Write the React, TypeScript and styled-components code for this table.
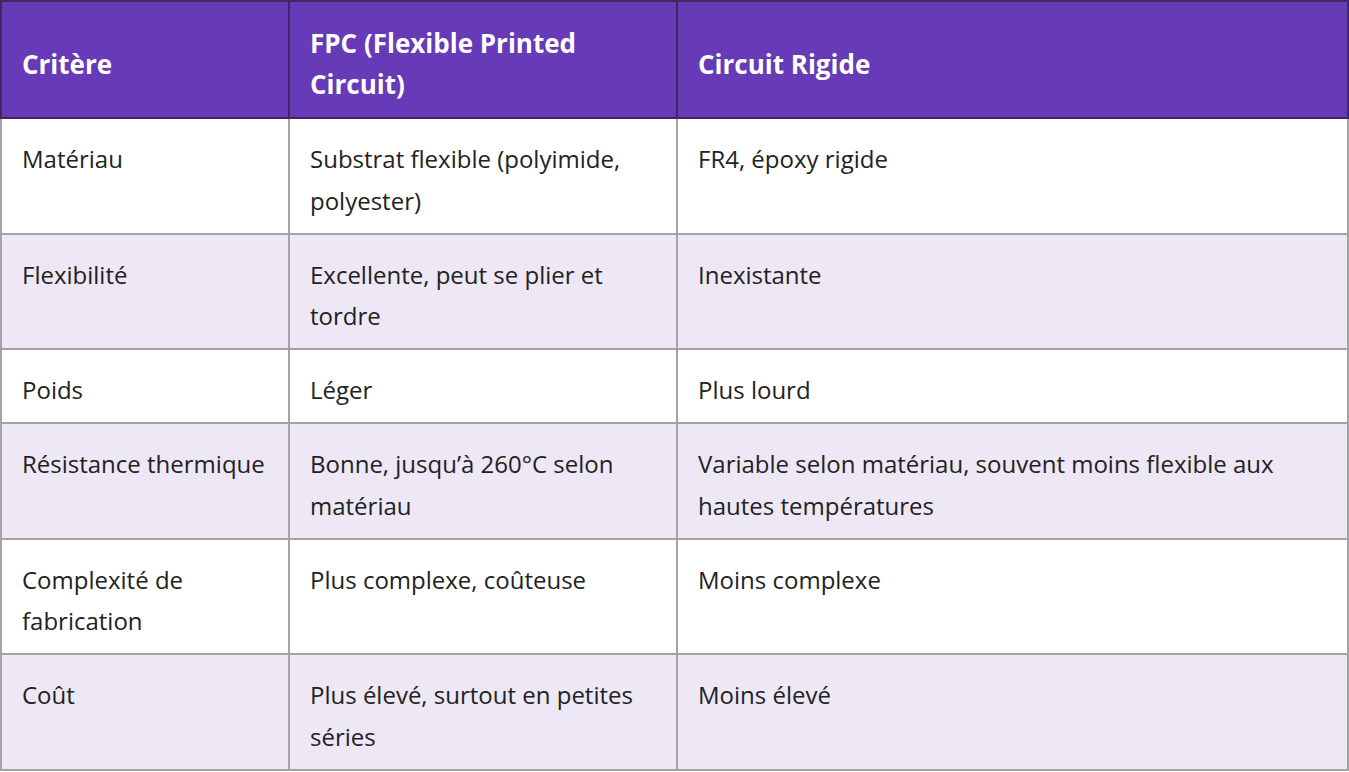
import styled, { createGlobalStyle } from "styled-components";

const GlobalStyle = createGlobalStyle`
  html, body {
    margin: 0;
    padding: 0;
    background: #ffffff;
  }
  body {
    font-family: "Open Sans", "Noto Sans", sans-serif;
  }
`;

const Table = styled.table`
  width: 1349px;
  border-collapse: collapse;
  table-layout: fixed;
  font-size: 24px;
  color: #222222;
`;

const HeadCell = styled.th`
  background: #673ab7;
  color: #ffffff;
  font-size: 26px;
  font-weight: 700;
  text-align: left;
  vertical-align: middle;
  padding: 21px 20px 12px;
  line-height: 41px;
  height: 117px;
  box-sizing: border-box;
  border: 2px solid #3d2a63;
`;

const Row = styled.tr<{ $striped: boolean }>`
  background: ${(p) => (p.$striped ? "#ede7f6" : "#ffffff")};
`;

const Cell = styled.td`
  padding: 19px 20px 11.5px;
  line-height: 41.5px;
  vertical-align: top;
  border: 2px solid #a3a3a3;
`;

const rows: [string, string, string][] = [
  ["Matériau", "Substrat flexible (polyimide, polyester)", "FR4, époxy rigide"],
  ["Flexibilité", "Excellente, peut se plier et tordre", "Inexistante"],
  ["Poids", "Léger", "Plus lourd"],
  [
    "Résistance thermique",
    "Bonne, jusqu’à 260°C selon matériau",
    "Variable selon matériau, souvent moins flexible aux hautes températures",
  ],
  ["Complexité de fabrication", "Plus complexe, coûteuse", "Moins complexe"],
  ["Coût", "Plus élevé, surtout en petites séries", "Moins élevé"],
];

export default function App() {
  return (
    <>
      <GlobalStyle />
      <Table>
        <colgroup>
          <col style={{ width: 288 }} />
          <col style={{ width: 388 }} />
          <col />
        </colgroup>
        <thead>
          <tr>
            <HeadCell>Critère</HeadCell>
            <HeadCell>FPC (Flexible Printed Circuit)</HeadCell>
            <HeadCell>Circuit Rigide</HeadCell>
          </tr>
        </thead>
        <tbody>
          {rows.map((r, i) => (
            <Row key={r[0]} $striped={i % 2 === 1}>
              <Cell>{r[0]}</Cell>
              <Cell>{r[1]}</Cell>
              <Cell>{r[2]}</Cell>
            </Row>
          ))}
        </tbody>
      </Table>
    </>
  );
}
